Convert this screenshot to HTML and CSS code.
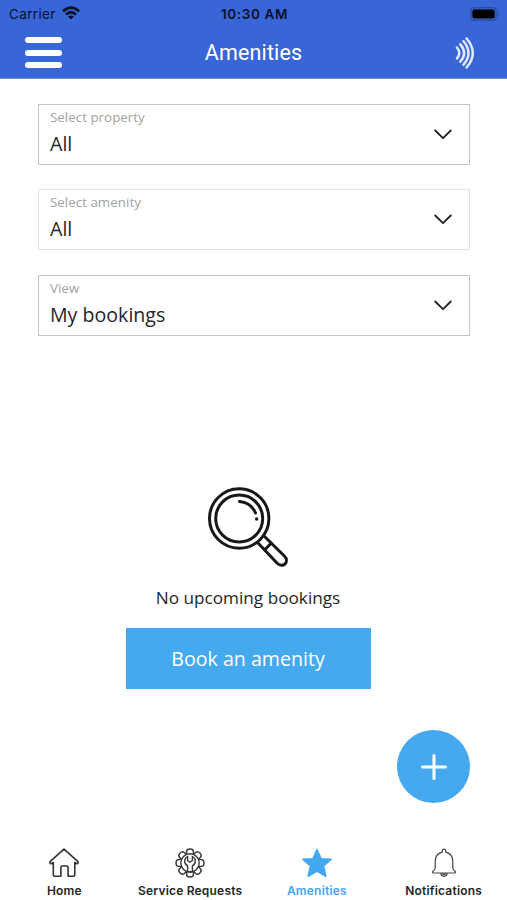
FILE: index.html
```html
<!DOCTYPE html>
<html lang="en">
<head>
<meta charset="utf-8">
<meta name="viewport" content="width=device-width, initial-scale=1">
<title>Amenities</title>
<link rel="stylesheet" href="styles.css">
</head>
<body>
<div class="app">
  <header class="header">
    <div class="status">
      <div class="carrier"><span>Carrier</span>
        <svg class="wifi" width="18" height="14" viewBox="0 0 18 14" fill="none" stroke="#07102a" stroke-width="2.7"><path d="M1 5.2Q9-1.8 17 5.2M4 8.4Q9 4.1 14 8.4"/><path d="M6 10.6Q9 8.2 12 10.6L9 13.6Z" fill="#07102a" stroke="none"/></svg>
      </div>
      <div class="time">10:30 AM</div>
      <svg class="battery" width="30" height="14" viewBox="0 0 30 14"><rect x=".8" y=".8" width="25.4" height="12.4" rx="3.5" fill="none" stroke="#2b4ea4" stroke-width="1.4"/><rect x="2.4" y="2.5" width="22.2" height="9" rx="2" fill="#000"/><path d="M27.6 5v4q1.7-.6 1.7-2t-1.7-2z" fill="#2b4ea4"/></svg>
    </div>
    <div class="titlebar">
      <button class="plain menu" aria-label="Menu"><i></i><i></i><i></i></button>
      <h1>Amenities</h1>
      <svg class="waves" width="20" height="34" viewBox="0 0 20 34" fill="none" stroke="#dfe8ff" stroke-width="2.500" stroke-linecap="round"><path d="M2 11.500Q6.500 17 2 22.500M5.300 8.300Q13 17 5.300 25.700M8.500 5.200Q18.500 17 8.500 28.800M11.600 2.500Q24 17 11.600 31.500"/></svg>
    </div>
  </header>
  <main class="main">
    <div class="field"><div><div class="label">Select property</div><div class="value">All</div></div><svg class="chevron" width="18" height="11" viewBox="0 0 18 11"><path d="M1.200 1.500 9 9.200 16.800 1.500"/></svg></div>
    <div class="field light"><div><div class="label">Select amenity</div><div class="value">All</div></div><svg class="chevron" width="18" height="11" viewBox="0 0 18 11"><path d="M1.200 1.500 9 9.200 16.800 1.500"/></svg></div>
    <div class="field"><div><div class="label">View</div><div class="value">My bookings</div></div><svg class="chevron" width="18" height="11" viewBox="0 0 18 11"><path d="M1.200 1.500 9 9.200 16.800 1.500"/></svg></div>
    <section class="empty">
      <svg class="search" width="82" height="82" viewBox="0 0 82 82" fill="none" stroke="#171717" stroke-width="3" stroke-linecap="round" stroke-linejoin="round"><circle cx="32.200" cy="31.500" r="29.700"/><circle cx="32.200" cy="31.500" r="23.500"/><path d="M32.500 14.500Q44 15.500 48.500 26"/><path d="M51.500 56.500 70.200 76.200C76 82 83 74.500 77.400 69L58 50"/><path d="M57.800 62.800 64.200 56.300"/><circle cx="49.600" cy="32" r="1.700" fill="#171717" stroke="none"/></svg>
      <p>No upcoming bookings</p>
      <button class="plain book">Book an amenity</button>
    </section>
    <button class="plain add" aria-label="Add booking"><svg width="28" height="28" viewBox="0 0 28 28" fill="none" stroke="#fff" stroke-width="3" stroke-linecap="round"><path d="M14 2.500v23M2.500 14h23"/></svg></button>
  </main>
  <nav class="tabs">
    <a class="tab home"><svg width="32" height="32" viewBox="0 0 32 32" fill="none" stroke="#333" stroke-width="1.600" stroke-linejoin="round"><path d="M16 2.200 30 14.700Q30.700 16.500 28.700 16.700L26.800 15.500V27.500Q26.800 29.200 25.100 29.200H20.100V20.200Q20.100 19 18.900 19H14.100Q12.900 19 12.900 20.200V29.200H7Q5.300 29.200 5.300 27.500V15.500L3.300 16.700Q1.300 16.500 2 14.700Z"/></svg><span>Home</span></a>
    <a class="tab"><svg width="32" height="32" viewBox="0 0 32 32" fill="#fff" stroke="#383838" stroke-width="1.400" stroke-linejoin="round"><path id="tooth" d="M12.600 8.500V4.600Q12.600 2 16 2t3.400 2.600v3.900"/><use href="#tooth" transform="rotate(45 16 16)"/><use href="#tooth" transform="rotate(90 16 16)"/><use href="#tooth" transform="rotate(135 16 16)"/><use href="#tooth" transform="rotate(180 16 16)"/><use href="#tooth" transform="rotate(225 16 16)"/><use href="#tooth" transform="rotate(270 16 16)"/><use href="#tooth" transform="rotate(315 16 16)"/><circle cx="16" cy="16" r="9.200"/><path d="M13.600 9.500v4l2.400 1.700 2.400-1.700v-4Q21.300 11 21.300 14q0 3.200-2.900 4.800v5.900h-4.800v-5.900Q10.700 17.200 10.700 14q0-3 2.900-4.500Z"/></svg><span>Service Requests</span></a>
    <a class="tab active"><svg width="32" height="32" viewBox="0 0 32 32" fill="#42a8ef" stroke="#42a8ef" stroke-width="1.600" stroke-linejoin="round"><path d="M16 2.700 20.100 11.800 30 12.400 22.500 19 24.800 29.200 16 24 7.200 29.200 9.500 19 2 12.400 11.900 11.800Z"/></svg><span>Amenities</span></a>
    <a class="tab"><svg width="32" height="32" viewBox="0 0 32 32" fill="none" stroke="#444" stroke-width="1.200" stroke-linejoin="round"><path d="M14.300 5.100V3.700Q14.300 2.200 16 2.200t1.700 1.500v1.400C22.300 6.200 24.800 10 24.800 14.500V20.500Q24.800 23 27.200 24.300 28.300 26 26.500 26H5.500Q3.700 26 4.800 24.300 7.200 23 7.200 20.500V14.500C7.200 10 9.700 6.200 14.300 5.100ZM12.800 26Q13 29.300 16 29.300T19.200 26M14.300 26.600Q16 28.600 17.700 26.600"/></svg><span>Notifications</span></a>
  </nav>
</div>
</body>
</html>
```
FILE: styles.css
```css
* { box-sizing: border-box; }
body { margin: 0; background: #fff; font-family: "Open Sans", sans-serif; color: #252525; }
.app { width: 507px; height: 900px; display: flex; flex-direction: column; overflow: hidden; }
.plain { border: 0; padding: 0; background: none; font: inherit; }
.header { height: 79px; background: #3966d6; flex: none; border-bottom: 1px solid #658be3; }
.status { display: grid; grid-template-columns: 1fr 100px 1fr; align-items: center; height: 27px; padding: 0 7px 0 9px; font: 13.500px/18px Inter, sans-serif; color: #07102a; }
.carrier { display: flex; align-items: center; gap: 6px; letter-spacing: .35px; }
.wifi { margin-top: -2px; }
.time { text-align: center; font-weight: 600; letter-spacing: .6px; white-space: nowrap; }
.battery { justify-self: end; }
.titlebar { height: 51px; display: grid; grid-template-columns: 100px 1fr 100px; align-items: center; padding: 0 32px 0 25px; }
.titlebar h1 { margin: 0; padding-left: 7px; text-align: center; font: 400 21.500px/30px Roboto, sans-serif; color: #fff; letter-spacing: .15px; }
.menu { width: 37px; display: flex; flex-direction: column; gap: 6.500px; }
.menu i { display: block; height: 6px; border-radius: 3px; background: #fff; }
.waves { justify-self: end; }
.main { flex: 1; padding: 24.500px 37px 0 38px; display: flex; flex-direction: column; }
.field { height: 61px; flex: none; margin-bottom: 24.500px; border: 1px solid #c6c6c6; padding: 0 17px 0 11px; display: flex; align-items: center; justify-content: space-between; }
.field.light { border-color: #e3e3e3; }
.label { font-size: 13.400px; line-height: 18px; color: #a2a2a2; margin-top: -4px; }
.value { font-size: 19.600px; line-height: 26px; margin-top: 5px; }
.chevron { fill: none; stroke: #222; stroke-width: 1.800; stroke-linecap: round; stroke-linejoin: round; }
.empty { display: flex; flex-direction: column; align-items: center; padding-top: 127px; }
.search { margin-left: -12px; }
.empty p { margin: 16.500px 0 18px; font-size: 17.200px; line-height: 24px; margin-left: -12px; }
.book { width: 245px; height: 61px; background: #44a9ef; color: #fff; font-size: 19.600px; margin-left: -12px; }
.add { width: 73px; height: 73px; border-radius: 50%; background: #44a9ef; align-self: flex-end; display: grid; place-items: center; margin-top: 41.500px; flex: none; }
.tabs { height: 60px; flex: none; display: grid; grid-template-columns: repeat(4, 1fr); }
.tab { display: flex; flex-direction: column; align-items: center; padding-top: 7px; font: 600 12px/18px Inter, sans-serif; letter-spacing: .2px; white-space: nowrap; }
.tab span { margin-top: 3px; }
.home { padding-left: 2px; }
.active { color: #42a8ef; }
```
